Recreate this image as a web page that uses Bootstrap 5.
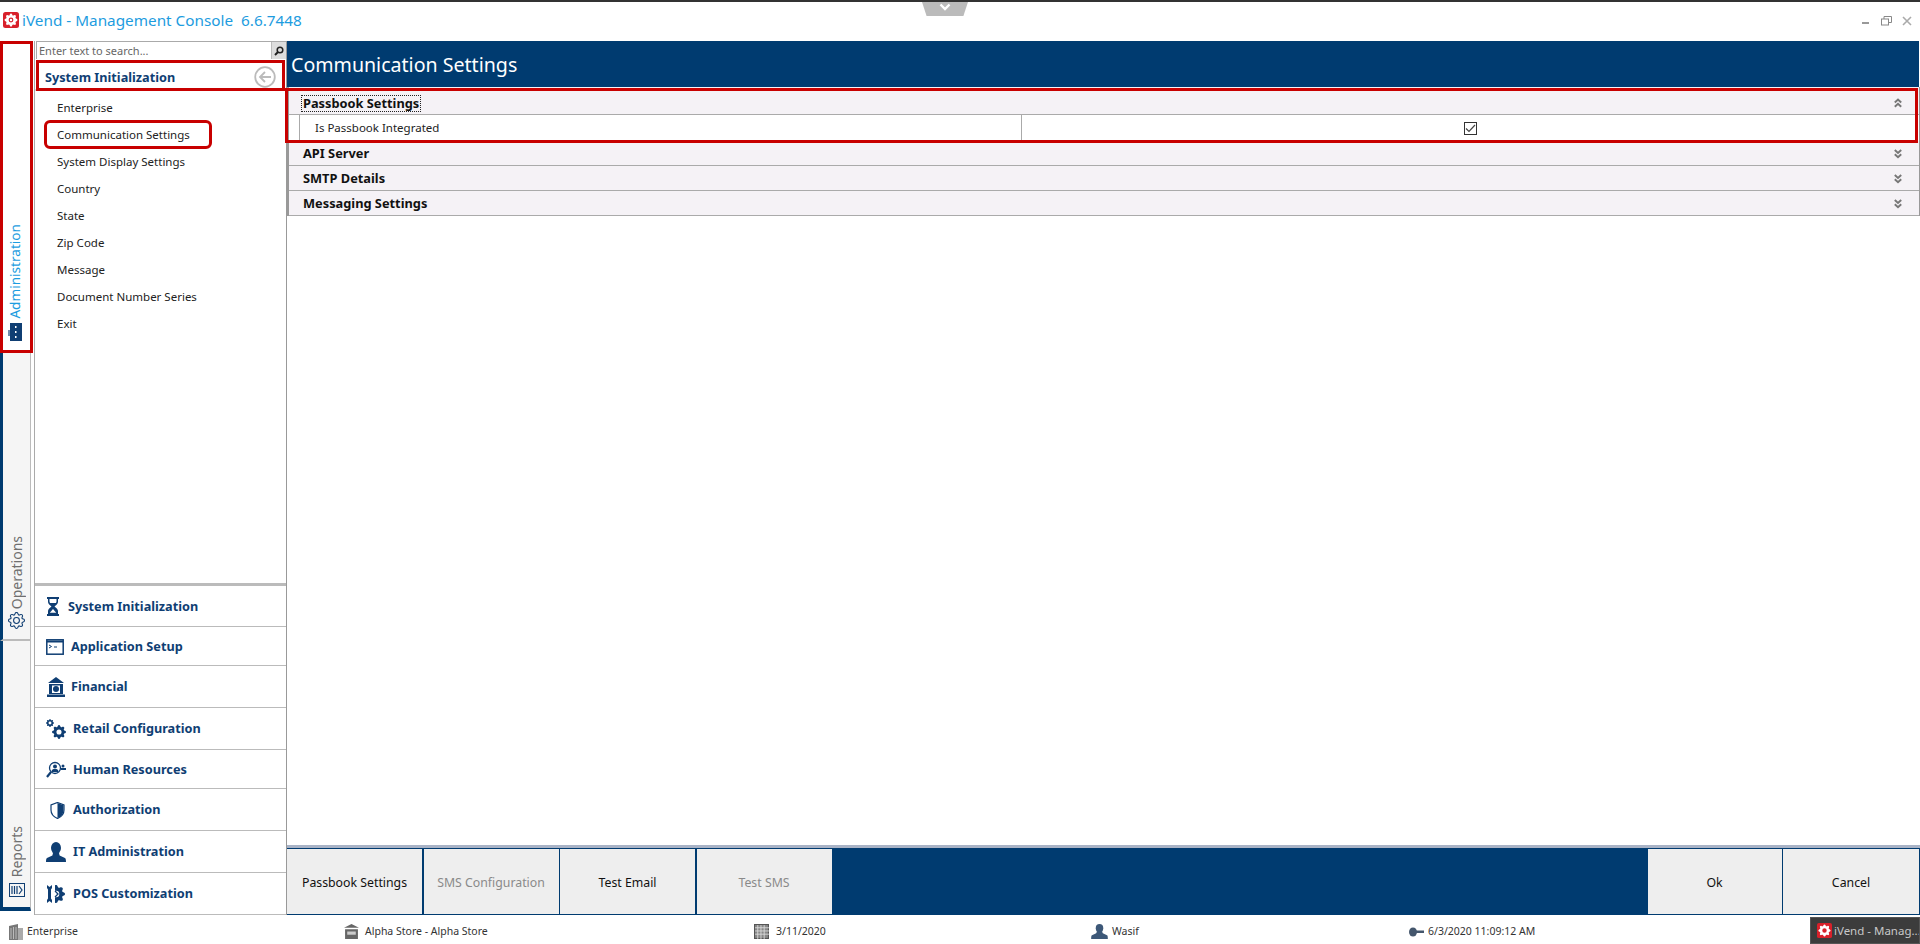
<!DOCTYPE html>
<html lang="en">
<head>
<meta charset="utf-8">
<title>iVend - Management Console</title>
<link href="https://cdn.jsdelivr.net/npm/bootstrap@5.3.0/dist/css/bootstrap.min.css" rel="stylesheet">
<style>
html,body{height:944px;overflow:hidden;background:#fff}
body{font-family:"Noto Sans","Liberation Sans",sans-serif;font-size:11.5px;color:#111;position:relative}
svg{display:block;flex:none}
.ttl-bar{height:41px;padding:6px 8px 0 3px;position:relative;border-top:2px solid #333}
.ttl-text{color:#1d9ce0;font-size:15.3px;white-space:pre;margin-left:3px;line-height:24px}
.win-btns{gap:10px;margin-top:8px}
.notch{position:absolute;left:922px;top:2px;width:46px;height:14px;background:#bbb;clip-path:polygon(0 0,100% 0,90% 100%,10% 100%)}
.notch svg{margin:1px auto 0}
.app-area{height:874px}
.rail{width:35px;border-right:1px solid #aaa;flex:none;background:#fff}
.rtab{width:31px;border-left:3px solid #003b70;border-right:1px solid #bbb;background:#f5f5f5;padding-bottom:10px;gap:3px}
.rtab-a{height:311px;border-left-color:transparent;border-right-color:transparent;background:#fff;color:#1d9ce0;padding-bottom:11px;padding-right:4px;gap:4px}
.rtab-a .vtxt{font-size:13.6px;text-rendering:geometricPrecision}
.rtab-o{height:289px;color:#6f6f6f;border-bottom:2px solid #bbb;padding-bottom:10px}
.rtab-r{height:270px;color:#6f6f6f;border-bottom:4px solid #003b70;padding-bottom:10px;gap:6px}
.vtxt{writing-mode:vertical-rl;transform:rotate(180deg);font-size:14px;line-height:18px}
.side{width:252px;flex:none;border-right:1px solid #999}
.srch{height:18px;border:1px solid #aaa;border-width:1px 0 0 1px;margin-left:1px}
.srch-in{font-size:11px;color:#666;padding-left:2px;line-height:17px}
.srch-btn{width:15px;background:#ddd;border-left:1px solid #bbb}
.side-hd{height:32px;padding:7px 10px 0 10px;color:#0f3e73;font-weight:700;font-size:12.7px;border-bottom:2px solid #ddd}
.side-hd svg{margin-top:-2px}
.nav-col{padding-top:3px;padding-left:22px}
.nav-it{height:27px;line-height:27px;font-size:11.5px;color:#222}
.acc{border-top:3px solid #bbb}
.acc-it{border-bottom:1px solid #bbb;padding:1px 0 0 11px;color:#0f3e73;font-weight:700;font-size:12.7px;height:42px;gap:5px}
.acc-it:nth-child(1){height:41px}
.acc-it:nth-child(1) .ico-w{width:17px}
.acc-it:nth-child(2),.acc-it:nth-child(5){height:39px}
.acc-it:nth-child(2) .ico-w,.acc-it:nth-child(3) .ico-w{width:20px}
.ico-w{width:22px}
.main-col{min-width:0}
.main-hd{height:46px;background:#003b70;color:#fff;font-size:19.6px;line-height:48px;padding-left:4px;margin-right:1px}
.set-area{border-left:2px solid #999;border-right:1px solid #999}
.grp{height:25px;background:#f5f2f6;border-bottom:1px solid #aaa;font-weight:700;font-size:12.8px;padding:1px 17px 0 14px;color:#111}
.grp-first{height:28px;padding-top:5px}
.foc{outline:1px dotted #222;line-height:15px;padding:0 1px;margin-left:-1px}
.sub-r{height:26px;margin-left:10px;border-left:1px solid #aaa;font-size:11.5px}
.sub-l{width:722px;border-right:1px solid #aaa;padding-left:15px;color:#222}
.chkb{width:13px;height:13px;border:1px solid #333}
.foot-line{height:3px;background:#a9b3c6;margin-top:auto}
.foot{height:67px;background:#003b70;padding:1px 1px 1px 0;gap:1.5px}
.fbtn{width:135px;border-radius:0;border:0;background:#eee;color:#111;font-size:12.3px;padding:3px 0 0}
.fbtn:hover{background:#eee;color:#111}
.fbtn:disabled{background:#eee;color:#8a8a8a;opacity:1}
.fbtn-l{width:134px}
.fbtn-m{width:136px}
.stbar{height:29px;font-size:10.5px;color:#333;position:relative}
.st-it{position:absolute;top:3px;height:27px;gap:4px}
.st-1{left:9px}.st-2{left:344px;gap:6px}.st-3{left:754px;gap:7px}.st-4{left:1091px}.st-5{left:1409px}
.taskb{position:absolute;right:0;top:2px;width:110px;height:27px;background:#3c3c3c;color:#c8c8c8;font-size:11.5px;gap:2px;padding-left:6px;border:1px solid #555;white-space:nowrap;overflow:hidden}
.red-ov{position:absolute;border:3px solid #c80000;pointer-events:none}
.ov-1{left:0;top:41px;width:33px;height:312px}
.ov-2{left:36px;top:60px;width:249px;height:31px}
.ov-3{left:285px;top:88px;width:1633px;height:55px}
.ov-4{left:44px;top:120px;width:168px;height:29px;border-radius:6px}
</style>
</head>
<body>
<svg width="0" height="0" class="position-absolute"><defs>
<path id="gearf" d="M9.405 1.050c-.413-1.400-2.397-1.400-2.810 0l-.1.34a1.464 1.464 0 0 1-2.105.872l-.31-.17c-1.283-.698-2.686.705-1.987 1.987l.169.311c.446.82.023 1.841-.872 2.105l-.34.1c-1.400.413-1.400 2.397 0 2.810l.34.1a1.464 1.464 0 0 1 .872 2.105l-.17.31c-.698 1.283.705 2.686 1.987 1.987l.311-.169a1.464 1.464 0 0 1 2.105.872l.1.34c.413 1.400 2.397 1.400 2.810 0l.1-.34a1.464 1.464 0 0 1 2.105-.872l.31.17c1.283.698 2.686-.705 1.987-1.987l-.169-.311a1.464 1.464 0 0 1 .872-2.105l.34-.1c1.400-.413 1.400-2.397 0-2.810l-.34-.1a1.464 1.464 0 0 1-.872-2.105l.17-.31c.698-1.283-.705-2.686-1.987-1.987l-.311.169a1.464 1.464 0 0 1-2.105-.872l-.1-.34zM8 10.930a2.929 2.929 0 1 1 0-5.860 2.929 2.929 0 0 1 0 5.858z"/>
<clipPath id="halfc"><rect x="9" y="0" width="11" height="20"/></clipPath>
</defs></svg>
<div class="ttl-bar d-flex align-items-start justify-content-between">
  <div class="d-flex align-items-center">
    <svg width="16" height="16" viewBox="0 0 16 16"><rect width="16" height="16" rx="2.5" fill="#d8202a"/><g transform="translate(1.500 1.500) scale(.8125)"><use href="#gearf" fill="#fff"/><circle cx="8" cy="8" r="1.500" fill="#fff"/></g></svg>
    <span class="ttl-text">iVend - Management Console  6.6.7448</span>
  </div>
  <div class="win-btns d-flex align-items-center">
    <svg width="10" height="10" viewBox="0 0 10 10"><rect x="1" y="6" width="7" height="2" fill="#999"/></svg>
    <svg width="11" height="10" viewBox="0 0 11 10" fill="none" stroke="#888"><rect x=".5" y="3" width="7" height="6"/><path d="M3 3V.5h7.500v6H8"/></svg>
    <svg width="10" height="10" viewBox="0 0 10 10" stroke="#aaa" stroke-width="1.600"><path d="M1 1l8 8M9 1L1 9"/></svg>
  </div>
</div>
<div class="notch"><svg width="12" height="8" viewBox="0 0 12 8" fill="none" stroke="#fff" stroke-width="2.400"><path d="M1.500 1.500L6 6l4.500-4.500"/></svg></div>

<div class="app-area d-flex">
  <div class="rail d-flex flex-column">
    <div class="rtab rtab-a d-flex flex-column-reverse align-items-center justify-content-start">
      <svg width="14" height="18" viewBox="0 0 14 18"><rect x="2" y="0" width="12" height="18" fill="#0f3e73"/><rect y="7" width="2" height="6" fill="#6f8cab"/><rect x="7" y="3" width="1.500" height="2" fill="#fff"/><rect x="7" y="8" width="1.500" height="2" fill="#fff"/><rect x="7" y="13" width="1.500" height="2" fill="#fff"/></svg>
      <span class="vtxt">Administration</span>
    </div>
    <div class="rtab rtab-o d-flex flex-column-reverse align-items-center justify-content-start">
      <svg width="17" height="17" viewBox="0 0 16 16" fill="#0f3e73"><path d="M8 4.754a3.246 3.246 0 1 0 0 6.492 3.246 3.246 0 0 0 0-6.492zM5.754 8a2.246 2.246 0 1 1 4.492 0 2.246 2.246 0 0 1-4.492 0z"/><path d="M9.796 1.343c-.527-1.790-3.065-1.790-3.592 0l-.094.319a.873.873 0 0 1-1.255.52l-.292-.16c-1.640-.892-3.433.902-2.540 2.541l.159.292a.873.873 0 0 1-.52 1.255l-.319.094c-1.790.527-1.790 3.065 0 3.592l.319.094a.873.873 0 0 1 .52 1.255l-.16.292c-.892 1.640.901 3.434 2.541 2.540l.292-.159a.873.873 0 0 1 1.255.52l.094.319c.527 1.790 3.065 1.790 3.592 0l.094-.319a.873.873 0 0 1 1.255-.52l.292.16c1.640.893 3.434-.902 2.540-2.541l-.159-.292a.873.873 0 0 1 .52-1.255l.319-.094c1.790-.527 1.790-3.065 0-3.592l-.319-.094a.873.873 0 0 1-.52-1.255l.16-.292c.893-1.640-.902-3.433-2.541-2.540l-.292.159a.873.873 0 0 1-1.255-.52l-.094-.319zm-2.633.283c.246-.835 1.428-.835 1.674 0l.094.319a1.873 1.873 0 0 0 2.693 1.115l.291-.16c.764-.415 1.600.42 1.184 1.185l-.159.292a1.873 1.873 0 0 0 1.116 2.692l.318.094c.835.246.835 1.428 0 1.674l-.319.094a1.873 1.873 0 0 0-1.115 2.693l.16.291c.415.764-.42 1.600-1.185 1.184l-.291-.159a1.873 1.873 0 0 0-2.693 1.116l-.094.318c-.246.835-1.428.835-1.674 0l-.094-.319a1.873 1.873 0 0 0-2.692-1.115l-.292.16c-.764.415-1.600-.42-1.184-1.185l.159-.291A1.873 1.873 0 0 0 1.945 8.930l-.319-.094c-.835-.246-.835-1.428 0-1.674l.319-.094A1.873 1.873 0 0 0 3.060 4.377l-.16-.292c-.415-.764.42-1.600 1.185-1.184l.292.159a1.873 1.873 0 0 0 2.692-1.115l.094-.319z"/></svg>
      <span class="vtxt">Operations</span>
    </div>
    <div class="rtab rtab-r d-flex flex-column-reverse align-items-center justify-content-start">
      <svg width="16" height="14" viewBox="0 0 16 14" fill="none" stroke="#0f3e73"><rect x=".5" y=".5" width="15" height="13"/><path d="M3 3v8M5.500 3v8M8 3v8M10 3l3 4-3 4" stroke-width="1.200"/></svg>
      <span class="vtxt">Reports</span>
    </div>
  </div>

  <div class="side d-flex flex-column">
    <div class="srch d-flex">
      <div class="srch-in flex-grow-1">Enter text to search...</div>
      <div class="srch-btn d-flex align-items-center justify-content-center">
        <svg width="10" height="10" viewBox="0 0 10 10" fill="none" stroke="#222" stroke-width="1.500"><circle cx="6" cy="4" r="2.800"/><path d="M4 6L1 9" stroke-width="2"/></svg>
      </div>
    </div>
    <div class="side-hd d-flex align-items-center justify-content-between">
      <span>System Initialization</span>
      <svg width="22" height="22" viewBox="0 0 22 22" fill="none" stroke="#bbb" stroke-width="1.800"><circle cx="11" cy="11" r="9.800"/><path d="M17 11H6M11 6l-5 5 5 5"/></svg>
    </div>
    <div class="nav-col flex-grow-1">
      <div class="nav-it">Enterprise</div>
      <div class="nav-it">Communication Settings</div>
      <div class="nav-it">System Display Settings</div>
      <div class="nav-it">Country</div>
      <div class="nav-it">State</div>
      <div class="nav-it">Zip Code</div>
      <div class="nav-it">Message</div>
      <div class="nav-it">Document Number Series</div>
      <div class="nav-it">Exit</div>
    </div>
    <div class="acc">
      <div class="acc-it d-flex align-items-center"><div class="ico-w"><svg width="14" height="19" viewBox="0 0 14 19" fill="#0f3e73"><path d="M1 0h12v2h-1v3c0 2-2 3-3.500 4.500C10 11 12 12 12 14v3h1v2H1v-2h1v-3c0-2 2-3 3.500-4.500C4 8 2 7 2 5V2H1z"/><path d="M3.500 2h7v2.500c0 .6-.3 1-.6 1.500H4.100c-.3-.5-.6-.9-.6-1.500z" fill="#fff"/><path d="M7 12L3.800 15.800h6.400z" fill="#fff"/></svg></div><span>System Initialization</span></div>
      <div class="acc-it d-flex align-items-center"><div class="ico-w"><svg width="18" height="16" viewBox="0 0 18 16" fill="none" stroke="#0f3e73"><rect x=".8" y=".8" width="16.400" height="14.400" stroke-width="1.500"/><path d="M1 2.500h16" stroke-width="2"/><path d="M3 6l2.500 1.500L3 9M8 8h3"/></svg></div><span>Application Setup</span></div>
      <div class="acc-it d-flex align-items-center"><div class="ico-w"><svg width="20" height="20" viewBox="0 0 20 20" fill="#0f3e73"><path d="M10 0L18 6H2zM3 7h14v10H3zM1 17.500h18V20H1z"/><rect x="6" y="8.500" width="8" height="7.500" fill="#fff"/><circle cx="10" cy="12" r="3" fill="#0f3e73"/></svg></div><span>Financial</span></div>
      <div class="acc-it d-flex align-items-center"><div class="ico-w"><svg width="20" height="20" viewBox="0 0 20 20" fill="#0f3e73"><use href="#gearf" transform="translate(6 6) scale(.875)"/><use href="#gearf" transform="scale(.5)"/></svg></div><span>Retail Configuration</span></div>
      <div class="acc-it d-flex align-items-center"><div class="ico-w"><svg width="20" height="18" viewBox="0 0 20 18" fill="none" stroke="#0f3e73"><circle cx="9" cy="7" r="5.500" stroke-width="1.300"/><path d="M5 11l-4 5" stroke-width="2.200"/><circle cx="9" cy="5.500" r="2" fill="#0f3e73" stroke="none"/><path d="M5.500 11c0-2.500 1.500-3 3.500-3s3.500.5 3.500 3z" fill="#0f3e73" stroke="none"/><circle cx="17" cy="5" r="1.500" fill="#0f3e73" stroke="none"/><rect x="15" y="7" width="5" height="2" fill="#0f3e73" stroke="none"/></svg></div><span>Human Resources</span></div>
      <div class="acc-it d-flex align-items-center"><div class="ico-w d-flex justify-content-center"><svg width="15" height="17" viewBox="0 0 15 17"><path d="M7.500 .5L14 3v5c0 4-3 7-6.500 8.500C4 15 1 12 1 8V3z" fill="#fff" stroke="#0f3e73" stroke-width="1.200"/><path d="M7.500 1v15C11 15 13.500 12 13.500 8V3.300z" fill="#0f3e73"/></svg></div><span>Authorization</span></div>
      <div class="acc-it d-flex align-items-center"><div class="ico-w"><svg width="20" height="20" viewBox="0 0 20 20" fill="#0f3e73"><ellipse cx="10" cy="6" rx="5" ry="6"/><path d="M7 11h6l.6 2.500L19 16c.7.4 1 1.500 1 4H0c0-2.500.3-3.600 1-4l5.400-2.500z"/></svg></div><span>IT Administration</span></div>
      <div class="acc-it d-flex align-items-center"><div class="ico-w"><svg width="20" height="20" viewBox="0 0 20 20" fill="#0f3e73"><path d="M1 1l2.500 2L6 1v3L5 5.500v9L6 16v3l-2.500-2L1 19v-3l1-1.500v-9L1 4z"/><g clip-path="url(#halfc)"><use href="#gearf" transform="translate(1 1) scale(1.125)"/></g><path d="M9 7l3 3-3 3" fill="none" stroke="#0f3e73" stroke-width="1.300"/></svg></div><span>POS Customization</span></div>
    </div>
  </div>

  <div class="main-col flex-grow-1 d-flex flex-column">
    <div class="main-hd">Communication Settings</div>
    <div class="set-area">
      <div class="grp grp-first d-flex align-items-center justify-content-between"><span class="foc">Passbook Settings</span>
        <svg width="8" height="10" viewBox="0 0 8 10" fill="none" stroke="#777" stroke-width="1.900"><path d="M.8 4.500L4 1.500l3.200 3M.8 8.800L4 5.800l3.200 3"/></svg></div>
      <div class="sub-r d-flex">
        <div class="sub-l d-flex align-items-center">Is Passbook Integrated</div>
        <div class="flex-grow-1 d-flex align-items-center justify-content-center">
          <div class="chkb d-flex align-items-center justify-content-center"><svg width="11" height="9" viewBox="0 0 11 9" fill="none" stroke="#444" stroke-width="1.200"><path d="M1 4.500L4 7.500 10 1"/></svg></div>
        </div>
      </div>
      <div class="grp d-flex align-items-center justify-content-between"><span>API Server</span>
        <svg width="8" height="10" viewBox="0 0 8 10" fill="none" stroke="#777" stroke-width="1.900"><path d="M.8 1L4 4l3.200-3M.8 5.300L4 8.300l3.200-3"/></svg></div>
      <div class="grp d-flex align-items-center justify-content-between"><span>SMTP Details</span>
        <svg width="8" height="10" viewBox="0 0 8 10" fill="none" stroke="#777" stroke-width="1.900"><path d="M.8 1L4 4l3.200-3M.8 5.300L4 8.300l3.200-3"/></svg></div>
      <div class="grp d-flex align-items-center justify-content-between"><span>Messaging Settings</span>
        <svg width="8" height="10" viewBox="0 0 8 10" fill="none" stroke="#777" stroke-width="1.900"><path d="M.8 1L4 4l3.200-3M.8 5.300L4 8.300l3.200-3"/></svg></div>
    </div>
    <div class="foot-line"></div>
    <div class="foot d-flex">
      <button class="btn fbtn" type="button">Passbook Settings</button>
      <button class="btn fbtn" type="button" disabled>SMS Configuration</button>
      <button class="btn fbtn" type="button">Test Email</button>
      <button class="btn fbtn" type="button" disabled>Test SMS</button>
      <div class="flex-grow-1"></div>
      <button class="btn fbtn fbtn-l" type="button">Ok</button>
      <button class="btn fbtn fbtn-m" type="button">Cancel</button>
    </div>
  </div>
</div>

<div class="stbar">
  <div class="st-it st-1 d-flex align-items-center"><svg width="14" height="16" viewBox="0 0 14 16"><path d="M0 2l9-2v16H0z" fill="#777"/><rect x="9" y="4" width="5" height="12" fill="#aaa"/><path d="M2 4v11M4.500 3v12M7 3v12" stroke="#bbb"/></svg><span>Enterprise</span></div>
  <div class="st-it st-2 d-flex align-items-center"><svg width="15" height="15" viewBox="0 0 14 14" fill="#666"><path d="M7 0l7 3.500H0zM1 5h12v9H1z"/><rect x="3" y="7" width="8" height="3" fill="#ccc"/></svg><span>Alpha Store - Alpha Store</span></div>
  <div class="st-it st-3 d-flex align-items-center"><svg width="15" height="15" viewBox="0 0 14 14" fill="none" stroke="#555"><rect x=".5" y=".5" width="13" height="13" fill="#888"/><path d="M3.500 1v13M6.500 1v13M9.500 1v13M1 3.500h13M1 6.500h13M1 9.500h13" stroke="#ddd" stroke-width=".8"/></svg><span>3/11/2020</span></div>
  <div class="st-it st-4 d-flex align-items-center"><svg width="17" height="15" viewBox="0 0 20 18" fill="#3d5878"><ellipse cx="10" cy="5" rx="4.500" ry="5"/><path d="M7 9h6l1 2 5 2.500c.7.400 1 1.500 1 4.500H0c0-3 .3-4.100 1-4.500L6 11z"/></svg><span>Wasif</span></div>
  <div class="st-it st-5 d-flex align-items-center"><svg width="15" height="10" viewBox="0 0 15 10" fill="#44566c"><ellipse cx="4" cy="5" rx="4" ry="4.500"/><rect x="6" y="3.500" width="9" height="2.500"/></svg><span>6/3/2020 11:09:12 AM</span></div>
  <div class="taskb d-flex align-items-center"><svg width="15" height="15" viewBox="0 0 16 16"><rect width="16" height="16" rx="2" fill="#d8202a"/><use href="#gearf" fill="#fff" transform="translate(1.500 1.500) scale(.8125)"/></svg><span>iVend - Manag...</span></div>
</div>

<div class="red-ov ov-1"></div>
<div class="red-ov ov-2"></div>
<div class="red-ov ov-3"></div>
<div class="red-ov ov-4"></div>
<script src="https://cdn.jsdelivr.net/npm/bootstrap@5.3.0/dist/js/bootstrap.bundle.min.js"></script>
</body>
</html>
